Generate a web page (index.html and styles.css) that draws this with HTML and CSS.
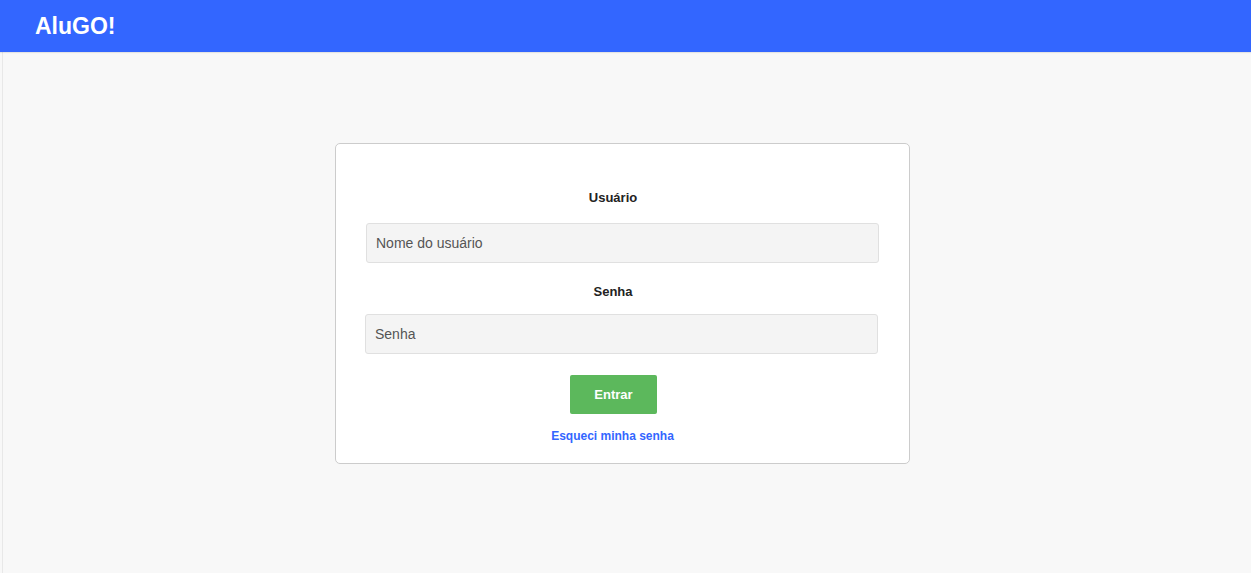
FILE: index.html
```html
<!DOCTYPE html>
<html lang="pt-BR">
<head>
<meta charset="utf-8">
<title>AluGO!</title>
<link rel="stylesheet" href="styles.css">
</head>
<body>
<header class="topbar">
  <div class="brand">AluGO!</div>
</header>
<main class="page">
  <form class="login-card" onsubmit="return false;">
    <label class="field-label" for="user">Usuário</label>
    <input class="field-input" id="user" type="text" placeholder="Nome do usuário">
    <label class="field-label field-label--second" for="pass">Senha</label>
    <input class="field-input field-input--second" id="pass" type="password" placeholder="Senha">
    <div class="actions">
      <button class="btn-enter" type="submit">Entrar</button>
    </div>
    <div class="forgot-row">
      <a class="forgot" href="#">Esqueci minha senha</a>
    </div>
  </form>
</main>
</body>
</html>
```

FILE: styles.css
```css
* {
  box-sizing: border-box;
}

html, body {
  margin: 0;
  padding: 0;
  height: 100%;
}

body {
  font-family: "Liberation Sans", Arial, sans-serif;
  background: #f8f8f8;
  display: flex;
  flex-direction: column;
  overflow: hidden;
}

.topbar {
  height: 52px;
  flex: 0 0 52px;
  background: #3366ff;
  display: flex;
  align-items: center;
  padding-left: 35px;
  box-shadow: 0 1px 1px rgba(0, 0, 0, 0.08);
  position: relative;
  z-index: 1;
}

.brand {
  color: #ffffff;
  font-size: 23px;
  font-weight: bold;
  padding-top: 1px;
}

.page {
  flex: 1;
  margin-left: 2px;
  border-left: 1px solid #e8e8e8;
  background: #f8f8f8;
  padding: 91px 9px 0 0;
}

.login-card {
  width: 575px;
  margin: 0 auto;
  background: #ffffff;
  border: 1px solid #cccccc;
  border-radius: 5px;
  padding: 44px 30px 19px 30px;
  display: flex;
  flex-direction: column;
}

.field-label {
  display: block;
  text-align: center;
  font-size: 13px;
  font-weight: bold;
  color: #222222;
  line-height: 20px;
  padding-right: 19px;
  margin-bottom: 15px;
}

.field-label--second {
  margin-top: 19px;
  margin-bottom: 12px;
}

.field-input {
  display: block;
  width: 100%;
  height: 40px;
  background: #f4f4f4;
  border: 1px solid #e0e0e0;
  border-radius: 3px;
  padding: 0 9px;
  font-family: "Liberation Sans", Arial, sans-serif;
  font-size: 14px;
  color: #555555;
  outline: none;
}

.field-input--second {
  margin-left: -1px;
}

.field-input::placeholder {
  color: #555555;
  opacity: 1;
}

.actions {
  display: flex;
  justify-content: center;
  padding-right: 18px;
  margin-top: 21px;
}

.btn-enter {
  width: 87px;
  height: 39px;
  background: #5cb85c;
  border: none;
  border-radius: 2px;
  color: #ffffff;
  font-family: "Liberation Sans", Arial, sans-serif;
  font-size: 13px;
  font-weight: bold;
  cursor: pointer;
}

.forgot-row {
  display: flex;
  justify-content: center;
  padding-right: 20px;
  margin-top: 14px;
  line-height: 16px;
}

.forgot {
  color: #3366ff;
  font-size: 12px;
  font-weight: bold;
  text-decoration: none;
}
```
